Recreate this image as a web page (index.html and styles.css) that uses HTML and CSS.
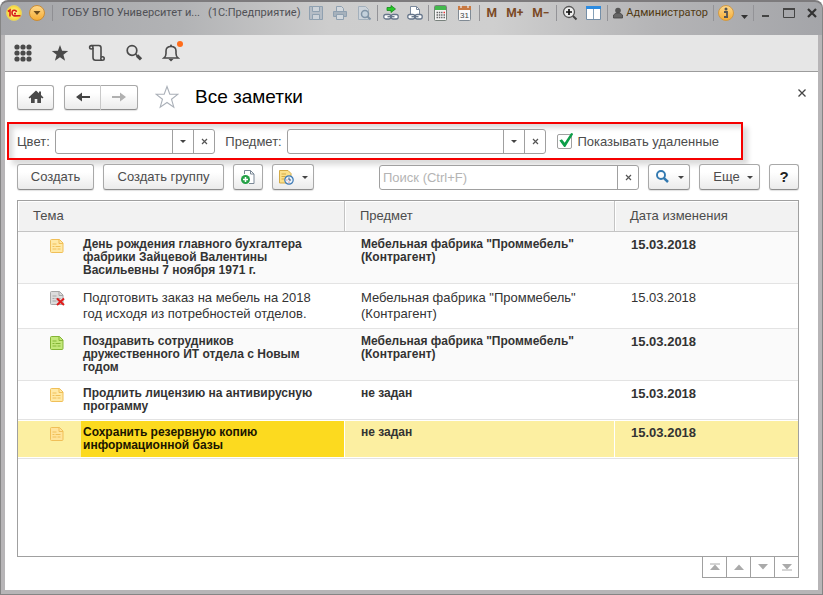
FILE: index.html
```html
<!DOCTYPE html>
<html lang="ru">
<head>
<meta charset="utf-8">
<title>Все заметки</title>
<link rel="stylesheet" href="styles.css">
</head>
<body>
<div class="window">
  <header class="titlebar">
    <svg class="round" viewBox="0 0 16 16"><defs><radialGradient id="yl"><stop offset="0" stop-color="#fff9b0"/><stop offset="1" stop-color="#f8d62c"/></radialGradient><linearGradient id="or" x2="0" y2="1"><stop offset="0" stop-color="#ffd98c"/><stop offset="1" stop-color="#f5ab33"/></linearGradient></defs><circle cx="8" cy="8" r="7.5" fill="url(#yl)" stroke="#e2cf6a"/><path d="M2 6.500L4 5v6.500M10.500 7C10 4.500 6 4.500 6 8s2.500 3 8.500 2.700M10 8.600H8" fill="none" stroke="#d8201c" stroke-width="1.600"/></svg>
    <button class="tool round-tool" aria-label="Меню"><svg class="round" viewBox="0 0 16 16"><circle cx="8" cy="8" r="7.500" fill="url(#or)" stroke="#c98b35"/><path d="M4.500 6h7L8 10z" fill="#6b4a1c"/></svg></button>
    <div class="caption"><span>ГОБУ ВПО Университет и...</span><span>(1С:Предприятие)</span></div>
    <div class="group faded">
      <button class="tool" aria-label="Сохранить"><svg viewBox="0 0 16 16"><path d="M1.500 1.500h13v13h-13z" fill="#b4bcc5" stroke="#8fa0b0"/><path d="M4.500 1.500h7v5h-7zM4.500 9.500h7v5h-7z" fill="#ccd2d8" stroke="#8fa0b0"/></svg></button>
      <button class="tool" aria-label="Печать"><svg viewBox="0 0 16 16"><path d="M4.500 6V1.500h5l2 2V6" fill="#d3d8dd" stroke="#8fa0b0"/><path d="M1.500 6.500h13v5h-13z" fill="#a6b1bc" stroke="#8fa0b0"/><path d="M4.500 9.500h7v5h-7z" fill="#d3d8dd" stroke="#8fa0b0"/></svg></button>
      <button class="tool" aria-label="Просмотр"><svg viewBox="0 0 16 16"><path d="M12.500 14.500h-10v-13h7l3 3z" fill="#ccd3da" stroke="#a3b0bc"/><circle cx="9" cy="9" r="3.500" fill="#c3d0db" stroke="#8093a5" stroke-width="1.500"/><path d="M11.500 11.500l3 3" stroke="#8093a5" stroke-width="2"/></svg></button>
    </div>
    <div class="group">
      <button class="tool" aria-label="Перейти по ссылке"><svg viewBox="0 0 16 16"><path d="M4 2.500h4V.5L12.500 4 8 7.500v-2H4z" fill="#28c928" stroke="#148a1c" stroke-width=".8"/><rect x=".8" y="9.500" width="7" height="4.500" rx="2" fill="#fff" stroke="#66758a" stroke-width="1.300"/><rect x="8.200" y="9.500" width="7" height="4.500" rx="2" fill="#fff" stroke="#66758a" stroke-width="1.300"/><path d="M4.500 11.700h7" stroke="#66758a" stroke-width="1.300"/></svg></button>
      <button class="tool" aria-label="Получить ссылку"><svg viewBox="0 0 16 16"><path d="M3.500 9.500v-8h6l3 3v5" fill="#fff" stroke="#7b899c"/><path d="M9.500 1.500v3h3" fill="none" stroke="#7b899c"/><rect x=".8" y="9.500" width="7" height="4.500" rx="2" fill="#fff" stroke="#66758a" stroke-width="1.300"/><rect x="8.200" y="9.500" width="7" height="4.500" rx="2" fill="#fff" stroke="#66758a" stroke-width="1.300"/><path d="M4.500 11.700h7" stroke="#66758a" stroke-width="1.300"/></svg></button>
    </div>
    <div class="group">
      <button class="tool" aria-label="Калькулятор"><svg viewBox="0 0 16 16"><rect x=".5" y=".5" width="12" height="15" rx="1" fill="#f5f5f5" stroke="#78817c"/><path d="M1 1h11v4H1z" fill="#43b94d"/><path d="M2.500 7.500h6M2.500 10h6M2.500 12.500h6" stroke="#666" stroke-width="1.500" stroke-dasharray="1.500 .8"/><path d="M9.500 7.500H11" stroke="#e33" stroke-width="1.500"/><path d="M9.500 10H11M9.500 12.500H11" stroke="#666" stroke-width="1.500"/></svg></button>
      <button class="tool" aria-label="Календарь"><svg viewBox="0 0 16 16"><rect x=".5" y="1.500" width="12" height="14" rx="1" fill="#fafafa" stroke="#808a94"/><path d="M0 1h13v4H0z" fill="#c87942"/><path d="M3 0v3M10 0v3" stroke="#eee" stroke-width="1.200"/><text class="day" x="6.500" y="13">31</text></svg></button>
    </div>
    <div class="group memory"><button class="tool">M</button><button class="tool">M+</button><button class="tool">M−</button></div>
    <div class="group">
      <button class="tool" aria-label="Масштаб"><svg viewBox="0 0 16 16"><circle cx="7" cy="7" r="5.500" fill="#eee" stroke="#555" stroke-width="1.300"/><path d="M4 7h6M7 4v6" stroke="#111" stroke-width="1.700"/><path d="M11 11l3.500 3.500" stroke="#444" stroke-width="2"/></svg></button>
      <button class="tool" aria-label="Панели"><svg viewBox="0 0 16 16"><path d="M.5 1.500h14v13H.5z" fill="#fff" stroke="#748ea7"/><path d="M0 1h15v3H0z" fill="#2c8be0"/><path d="M7.500 4v10" stroke="#84a0b8"/></svg></button>
    </div>
    <div class="group"><button class="tool user"><svg class="person" viewBox="0 0 10 12"><circle cx="5" cy="3.500" r="2.800" fill="#555"/><path d="M3 6L.5 8v3h9V8L7 6z" fill="#666" stroke="#444" stroke-width=".8"/></svg>Администратор</button></div>
    <div class="group info">
      <button class="tool" aria-label="О программе"><svg viewBox="0 0 16 16"><circle cx="8" cy="8" r="7.500" fill="url(#or)" stroke="#cf9a48"/><circle cx="8" cy="4" r="1.500" fill="#555"/><path d="M6 7h3v5h1M6 12h4" fill="none" stroke="#555" stroke-width="1.800"/></svg></button>
      <button class="tool" aria-label="Ещё команды"><svg class="drop" viewBox="0 0 9 16"><path d="M1 10h7l-3.500 4z" fill="#333"/></svg></button>
    </div>
    <div class="group system">
      <button class="tool" aria-label="Свернуть"><svg viewBox="0 0 12 12"><path d="M2 9h7" stroke="#444" stroke-width="2"/></svg></button>
      <button class="tool" aria-label="Развернуть"><svg viewBox="0 0 12 12"><path d="M.5 1.500h11v9H.5z" fill="none" stroke="#444"/><path d="M0 2h12" stroke="#444" stroke-width="2"/></svg></button>
      <button class="tool" aria-label="Закрыть окно"><svg viewBox="0 0 12 12"><path d="M2 2l8 8M10 2l-8 8" stroke="#333" stroke-width="2.200"/></svg></button>
    </div>
  </header>

  <nav class="sections">
    <button class="tool" aria-label="Разделы"><svg viewBox="0 0 18 18" fill="#4a4a4a"><circle cx="3" cy="3" r="2.600"/><circle cx="9" cy="3" r="2.600"/><circle cx="15" cy="3" r="2.600"/><circle cx="3" cy="9" r="2.600"/><circle cx="9" cy="9" r="2.600"/><circle cx="15" cy="9" r="2.600"/><circle cx="3" cy="15" r="2.600"/><circle cx="9" cy="15" r="2.600"/><circle cx="15" cy="15" r="2.600"/></svg></button>
    <button class="tool" aria-label="Избранное"><svg viewBox="0 0 18 18"><path d="M9 1l2.100 5.800 6.100.2-4.800 3.800 1.700 6L9 13.300l-5.100 3.500 1.700-6L.8 7l6.100-.2z" fill="#4a4a4a"/></svg></button>
    <button class="tool" aria-label="История"><svg viewBox="0 0 18 18" fill="none" stroke="#4a4a4a" stroke-width="1.600"><path d="M3.500 1.500h7.300q2.200 0 2.200 2.300v9.400M5 4v9.500q0 2.700 2.500 2.700h6.500"/><circle cx="3.300" cy="3.300" r="1.700"/><circle cx="14.500" cy="14.500" r="1.700"/></svg></button>
    <button class="tool" aria-label="Поиск"><svg viewBox="0 0 18 18" fill="none" stroke="#4a4a4a"><circle cx="7" cy="6.500" r="4.800" stroke-width="1.700"/><path d="M10.500 10l2 2" stroke-width="1.600"/><path d="M12 11.500l4 3.800" stroke-width="3.200"/></svg></button>
    <button class="tool bell" aria-label="Оповещения"><svg viewBox="0 0 18 18"><path d="M2 14q2-1.500 2-4.500V7q0-4.500 5-4.500T14 7v2.500q0 3 2 4.500z" fill="none" stroke="#4a4a4a" stroke-width="1.600"/><path d="M7.500 2.500L9 0l1.500 2.500M6.500 15h5L9 17.500z" fill="#4a4a4a"/></svg><span class="dot"></span></button>
  </nav>

  <main class="form">
    <div class="heading">
      <button class="btn home" aria-label="Начальная страница"><svg class="i16" viewBox="0 0 16 16"><path d="M8 1.500L.5 8.500 1.700 9.500 3 8.500V14h3.700v-4h2.600v4H13V8.500l1.300 1 1.200-1-2.500-2.400V2.500h-2v1.800z" fill="#4a4a4a"/></svg></button>
      <div class="history">
        <button class="btn" aria-label="Назад"><svg class="i16" viewBox="0 0 16 16"><path d="M1 8l6-4.500V7h8v2H7v3.500z" fill="#444"/></svg></button>
        <button class="btn" aria-label="Вперед"><svg class="i16" viewBox="0 0 16 16"><path d="M15 8L9 3.500V7H1v2h8v3.500z" fill="#b0b0b0"/></svg></button>
      </div>
      <button class="tool star" aria-label="В избранное"><svg viewBox="0 0 24 24"><path d="M12 1.500l2.800 7.700h8.200l-6.500 5 2.300 8-6.800-4.700-6.800 4.700 2.300-8-6.500-5h8.200z" fill="#fff" stroke="#aab0b8" stroke-width="1.100"/></svg></button>
      <h1>Все заметки</h1>
      <button class="tool close" aria-label="Закрыть"><svg viewBox="0 0 10 10"><path d="M1.500 1.500l7 7M8.500 1.500l-7 7" stroke="#444" stroke-width="1.300"/></svg></button>
    </div>

    <div class="filters">
      <label for="color">Цвет:</label>
      <div class="combo color"><input id="color" type="text"><button aria-label="Выбрать цвет"><i class="arrow"></i></button><button aria-label="Очистить цвет"><svg class="x" viewBox="0 0 7 7"><path d="M1 1l5 5M6 1L1 6" stroke="#555" stroke-width="1.200"/></svg></button></div>
      <label for="subject">Предмет:</label>
      <div class="combo subject"><input id="subject" type="text"><button aria-label="Выбрать предмет"><i class="arrow"></i></button><button aria-label="Очистить предмет"><svg class="x" viewBox="0 0 7 7"><path d="M1 1l5 5M6 1L1 6" stroke="#555" stroke-width="1.200"/></svg></button></div>
      <label class="check"><input type="checkbox" checked>Показывать удаленные</label>
    </div>

    <div class="commands">
      <button class="btn create">Создать</button>
      <button class="btn create-group">Создать группу</button>
      <button class="btn square" aria-label="Создать копированием"><svg class="i16" viewBox="0 0 16 16"><path d="M4.500 5V1.500h6l3.500 3.500v9.500H9" fill="#fff" stroke="#7b8896"/><path d="M10.500 1.500V5H14" fill="none" stroke="#7b8896"/><circle cx="5.500" cy="10.500" r="4.500" fill="#24a146"/><path d="M3 10.500h5M5.500 8v5" stroke="#fff" stroke-width="1.500"/></svg></button>
      <button class="btn menu" aria-label="Напоминание"><svg class="i16" viewBox="0 0 16 16"><path d="M1.500 1.500h8.500l3 3v9.500H1.500z" fill="#fbe08a" stroke="#d3aa46"/><path d="M3.500 5H8M3.500 7.500h4M3.500 10h2.500" stroke="#d3aa46"/><circle cx="11" cy="11" r="4.200" fill="#e8f2fb" stroke="#3b78b4" stroke-width="1.200"/><path d="M11 8.500V11h2" fill="none" stroke="#35567c"/><path d="M8.500 11h.8M11 13.500v-.8" stroke="#d33"/></svg><i class="arrow"></i></button>
      <div class="combo search"><input type="text" placeholder="Поиск (Ctrl+F)" aria-label="Поиск"><button aria-label="Очистить поиск"><svg class="x" viewBox="0 0 7 7"><path d="M1 1l5 5M6 1L1 6" stroke="#555" stroke-width="1.200"/></svg></button></div>
      <button class="btn menu" aria-label="Найти"><svg class="i16" viewBox="0 0 16 16" fill="none" stroke="#3279b0"><circle cx="7" cy="6" r="4" stroke-width="1.900"/><path d="M9.700 8.800l4.300 4.200" stroke-width="2.500"/></svg><i class="arrow"></i></button>
      <button class="btn more">Еще<i class="arrow"></i></button>
      <button class="btn square help">?</button>
    </div>

    <div class="list">
      <table>
        <colgroup><col class="c-icon"><col class="c-topic"><col class="c-subject"><col></colgroup>
        <thead><tr><th colspan="2">Тема</th><th>Предмет</th><th>Дата изменения</th></tr></thead>
        <tbody>
          <tr class="unread"><td class="icon"><svg class="note" viewBox="0 0 14 14"><use href="#note"/></svg></td><td>День рождения главного бухгалтера фабрики Зайцевой Валентины Васильевны 7 ноября 1971 г.</td><td>Мебельная фабрика "Проммебель" (Контрагент)</td><td class="date">15.03.2018</td></tr>
          <tr><td class="icon"><svg class="note deleted" viewBox="0 0 14 14"><use href="#note"/><path d="M7 7.500l7 6.500M14 7.500L7 14" stroke="#e01b1b" stroke-width="2"/></svg></td><td>Подготовить заказ на мебель на 2018 год исходя из потребностей отделов.</td><td>Мебельная фабрика "Проммебель" (Контрагент)</td><td class="date">15.03.2018</td></tr>
          <tr class="unread"><td class="icon"><svg class="note green" viewBox="0 0 14 14"><use href="#note"/></svg></td><td>Поздравить сотрудников дружественного ИТ отдела с Новым годом</td><td>Мебельная фабрика "Проммебель" (Контрагент)</td><td class="date">15.03.2018</td></tr>
          <tr class="unread"><td class="icon"><svg class="note" viewBox="0 0 14 14"><use href="#note"/></svg></td><td>Продлить лицензию на антивирусную программу</td><td>не задан</td><td class="date">15.03.2018</td></tr>
          <tr class="unread selected"><td class="icon"><svg class="note" viewBox="0 0 14 14"><use href="#note"/></svg></td><td class="current">Сохранить резервную копию информационной базы</td><td>не задан</td><td class="date">15.03.2018</td></tr>
        </tbody>
      </table>
    </div>
    <div class="pager">
      <button aria-label="В начало"><svg viewBox="0 0 10 8"><path d="M0 1h10" stroke="#aaa"/><path d="M5 1.500L10 7H0z" fill="#aaa"/></svg></button>
      <button aria-label="Вверх"><svg viewBox="0 0 10 8"><path d="M5 1.500L10 7H0z" fill="#aaa"/></svg></button>
      <button aria-label="Вниз"><svg viewBox="0 0 10 8"><path d="M5 6.500L10 1H0z" fill="#aaa"/></svg></button>
      <button aria-label="В конец"><svg viewBox="0 0 10 8"><path d="M0 7h10" stroke="#aaa"/><path d="M5 6.500L10 1H0z" fill="#aaa"/></svg></button>
    </div>
  </main>
</div>
<svg class="defs" aria-hidden="true"><symbol id="note" viewBox="0 0 14 14"><path d="M.5 1.500q0-1 1-1h8l3.500 3.500v8.500q0 1-1 1H1.500q-1 0-1-1z" fill="var(--paper)" stroke="var(--ink)"/><path d="M9 .5v4h4M2.500 5h4M2.500 7.500h2M5.500 7.500h5M2.500 10h4M7.500 10h3" fill="none" stroke="var(--ink)"/></symbol></svg>
</body>
</html>
```
FILE: styles.css
```css
* { box-sizing: border-box; }

body {
  margin: 0;
  background: #fff;
  font: 13px/16px "Liberation Sans", Arial, sans-serif;
  color: #4c4c4c;
}

button, input {
  margin: 0;
  padding: 0;
  font: inherit;
  color: inherit;
}

svg { display: block; flex: none; }
.defs { display: none; }

.window {
  display: flex;
  flex-direction: column;
  min-height: 100vh;
  padding: 0 4px 4px;
  border: 1px solid #858585;
  border-top: 2px solid #7d7b7d;
  border-radius: 8px 8px 0 0;
  background: linear-gradient(90deg, #a4a5a9, #b2b3b5 22%, #cdcdcd 40%, #cfcfcf 60%, #b4b4b6 80%, #a4a5a9) top / 100% 33px no-repeat, #b7b5b7;
}

/* Title bar */
.titlebar {
  display: flex;
  align-items: center;
  height: 33px;
  padding: 0 0 11px 1px;
  font: 11px/16px Roboto, sans-serif;
}

.tool {
  display: flex;
  align-items: center;
  border: 0;
  background: none;
}

.titlebar svg { width: 16px; height: 16px; }
.round-tool { margin-left: 7px; }

.caption {
  display: flex;
  flex: 1;
  gap: 8px;
  min-width: 0;
  margin-left: 7px;
  padding-left: 9px;
  border-left: 1px solid #8f8f93;
  white-space: nowrap;
  color: #505156;
}

.group {
  display: flex;
  align-items: center;
  gap: 8px;
  height: 16px;
  padding: 0 5px;
  border-left: 1px solid #939397;
}

.group.faded { border-left: 0; }
.group.memory { gap: 9px; padding: 0 7px; font-size: 12px; font-weight: 700; color: #7b4a26; }
.group.info { gap: 6px; padding: 0 4px; }
.group.system { gap: 11px; padding: 0 0 0 6px; }
.group.system svg { width: 12px; height: 12px; }
.day { font: 8px "Liberation Sans", sans-serif; text-anchor: middle; fill: #444; }
.user { gap: 3px; color: #513a12; }
.titlebar .person { width: 10px; height: 12px; }
.titlebar .drop { width: 9px; }

/* Section panel */
.sections {
  display: flex;
  align-items: center;
  gap: 19px;
  height: 37px;
  padding: 0 9px;
  border-bottom: 1px solid #9c9c9c;
  background: #e6e6e6;
}

.sections svg { width: 18px; height: 18px; }
.bell { position: relative; }

.dot {
  position: absolute;
  top: -3px;
  right: -3px;
  width: 6px;
  height: 6px;
  border-radius: 50%;
  background: #ff6c1a;
}

/* Form */
.form {
  display: flex;
  flex: 1;
  flex-direction: column;
  padding: 12px 19px 12px 12px;
  background: #fff;
}

.btn {
  display: flex;
  align-items: center;
  justify-content: center;
  height: 26px;
  border: 1px solid #a9a9a9;
  border-bottom-color: #8d8d8d;
  border-radius: 3px;
  background: linear-gradient(#fff 30%, #ebebeb);
  box-shadow: 0 1px 1px rgba(0, 0, 0, .12);
}

.i16 { width: 16px; height: 16px; }

.heading {
  display: flex;
  align-items: center;
  height: 26px;
}

.heading .btn { width: 37px; height: 25px; }
.history { display: flex; margin-left: 10px; }
.history .btn:first-child { border-right-color: #ccc; border-radius: 3px 0 0 3px; }
.history .btn:last-child { border-left: 0; border-radius: 0 3px 3px 0; }
.star { margin-left: 17px; }
.star svg { width: 24px; height: 24px; }

h1 {
  flex: 1;
  margin: 0 0 0 16px;
  font: 19px/24px "Liberation Sans", Arial, sans-serif;
  color: #000;
}

.close { align-self: flex-start; margin: 4px -8px 0 0; }
.close svg { width: 10px; height: 10px; }

.filters {
  display: flex;
  align-items: center;
  height: 38px;
  margin: 12px 56px 0 -10px;
  padding: 1px 22px 0 8px;
  border: 2px solid #f50000;
  box-shadow: 5px 5px 5px rgba(0, 0, 0, .14), inset 5px 5px 5px -1px rgba(0, 0, 0, .14);
}

.filters label { white-space: nowrap; }

.combo {
  display: flex;
  min-width: 0;
  height: 25px;
  border: 1px solid #a0a0a0;
  border-radius: 3px;
  background: #fff;
}

.combo input {
  flex: 1;
  min-width: 0;
  padding: 0 3px;
  border: 0;
  outline: 0;
  background: none;
}

.combo input::placeholder { color: #b4b4b4; opacity: 1; }

.combo button {
  display: flex;
  align-items: center;
  justify-content: center;
  width: 21px;
  border: 0;
  border-left: 1px solid #a0a0a0;
  background: none;
}

.color { flex: 160 1 0; margin: 0 10px 0 5px; }
.subject { flex: 260 1 0; margin: 0 11px 0 5px; }

.arrow {
  width: 0;
  border: 3px solid transparent;
  border-top-color: #444;
  border-bottom: 0;
}

.x { width: 7px; height: 7px; }

.check { display: flex; align-items: center; gap: 5px; }

.check input {
  position: relative;
  width: 15px;
  height: 15px;
  border: 1px solid #a0a0a0;
  border-radius: 2px;
  background: #fff;
  appearance: none;
}

.check input:checked::before {
  content: "";
  position: absolute;
  inset: -2px -2px 1px 1px;
  background: #0d9e49;
  clip-path: polygon(0 54%, 18% 44%, 38% 70%, 84% 0, 100% 6%, 42% 100%, 34% 100%);
}

.commands {
  display: flex;
  gap: 9px;
  margin-top: 4px;
  position: relative;
}

.create { width: 77px; }
.create-group { width: 121px; }
.square { width: 30px; }
.menu { gap: 8px; width: 42px; }
.more { gap: 7px; width: 61px; padding-left: 7px; }
.help { font-size: 15px; font-weight: 700; color: #222; }
.search { flex: 1; margin: 1px 0 0 56px; }

/* Notes list */
.list {
  flex: 1;
  margin-top: 10px;
  border: 1px solid #a0a0a0;
}

table {
  width: 100%;
  table-layout: fixed;
  border-spacing: 0;
}

.c-icon { width: 63px; }
.c-topic { width: 264px; }
.c-subject { width: 270px; }

th {
  height: 31px;
  padding: 0 15px;
  border-right: 1px solid #c4c4c4;
  border-bottom: 1px solid #c4c4c4;
  background: #f2f2f2;
  box-shadow: inset 1px 1px #fff;
  font-weight: 400;
  text-align: left;
}

th:last-child { border-right: 0; }

td {
  padding: 6px 16px;
  border-bottom: 1px solid #e3e3e3;
  vertical-align: top;
  color: #333;
}

td:nth-child(2) { padding: 6px 18px 6px 2px; }
tbody tr:nth-child(odd) { background: #fafafa; }
.unread td { font-size: 12px; font-weight: 700; line-height: 13px; }
.unread td.date { font-size: 13px; }
td.icon { padding: 7px 0 0 32px; }

.note {
  --paper: #ffe9a6;
  --ink: #f0bf58;
  width: 14px;
  height: 14px;
  overflow: visible;
}

.note.green { --paper: #c3e87a; --ink: #84b536; }
.note.deleted { --paper: #dcdcdc; --ink: #a6a6a6; }

.selected td {
  background: #fcefa1;
  box-shadow: inset -1px 0 #fff, inset 0 1px #fff, inset 0 -1px #fff;
}

.selected td.icon, .selected td.date { box-shadow: inset 0 1px #fff, inset 0 -1px #fff; }
.selected td.current { background: #fcda1f; color: #1a1500; }
.selected .note { --paper: #ffe39a; }

.pager {
  display: flex;
  align-self: flex-end;
  margin-top: -1px;
  border: 1px solid #a0a0a0;
}

.pager button {
  display: flex;
  align-items: center;
  justify-content: center;
  width: 24px;
  height: 20px;
  border: 0;
  border-left: 1px solid #a0a0a0;
  background: none;
}

.pager button:first-child { width: 23px; border-left: 0; }
.pager svg { width: 10px; height: 8px; }
```
